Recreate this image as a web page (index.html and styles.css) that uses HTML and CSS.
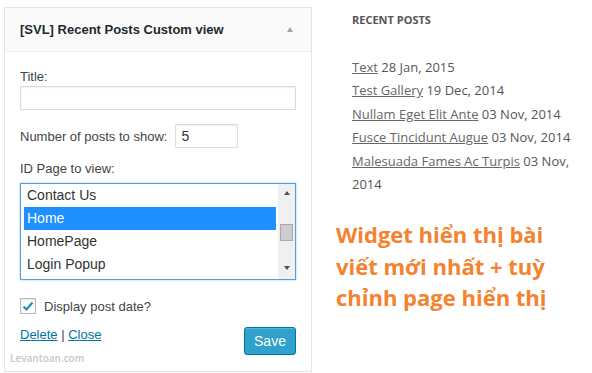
FILE: index.html
```html
<!DOCTYPE html>
<html lang="vi">
  <head>
    <meta charset="UTF-8" />
    <meta name="viewport" content="width=device-width, initial-scale=1.0" />
    <title>SVL Recent Posts widget</title>
    <link rel="stylesheet" href="styles.css">
  </head>
  <body>
    <!--
      Widget settings panel
    -->
    <div class="widget">
      <div class="widget-top">
        <h3>[SVL] Recent Posts Custom view</h3>
        <span class="toggle" aria-hidden="true"></span>
      </div>

      <form class="widget-inside">
        <label class="field-label" for="title">Title:</label>
        <input id="title" class="text-input" type="text" />

        <div class="inline-row">
          <label for="number">Number of posts to show:</label>
          <input id="number" class="small-input" type="text" value="5" />
        </div>

        <label class="field-label">ID Page to view:</label>
        <div class="listbox">
          <ul class="options">
            <li>Contact Us</li>
            <li class="selected">Home</li>
            <li>HomePage</li>
            <li>Login Popup</li>
          </ul>
          <div class="scrollbar" aria-hidden="true">
            <span class="arrow up"></span>
            <span class="thumb"></span>
            <span class="arrow down"></span>
          </div>
        </div>

        <div class="check-row">
          <span class="checkbox">
            <svg width="14" height="14" viewBox="0 0 14 14">
              <path d="M2.5 7.5 L5.5 10.5 L11.5 3.5" fill="none" stroke="#1e8cbe" stroke-width="2.2" />
            </svg>
          </span>
          <span>Display post date?</span>
        </div>

        <div class="actions">
          <div class="links">
            <a href="#">Delete</a> | <a href="#">Close</a>
          </div>
          <button type="button" class="save">Save</button>
        </div>
      </form>

      <span class="watermark">Levantoan.com</span>
    </div>

    <!--
      Front-end preview
    -->
    <aside class="sidebar">
      <section class="recent">
        <h4>Recent Posts</h4>
        <ul>
          <li><a href="#">Text</a> 28 Jan, 2015</li>
          <li><a href="#">Test Gallery</a> 19 Dec, 2014</li>
          <li><a href="#">Nullam Eget Elit Ante</a> 03 Nov, 2014</li>
          <li><a href="#">Fusce Tincidunt Augue</a> 03 Nov, 2014</li>
          <li><a href="#">Malesuada Fames Ac Turpis</a> 03 Nov, 2014</li>
        </ul>
      </section>

      <p class="caption">Widget hiển thị bài viết mới nhất + tuỳ chỉnh page hiển thị</p>
    </aside>
  </body>
</html>
```

FILE: styles.css
```css
/*
  Global styles
*/

:root {
  --border: #e5e5e5;
  --text: #444;
  --link: #0073aa;
  --orange: #f5822f;
}
* {
  margin: 0;
  padding: 0;
  box-sizing: border-box;
}
body {
  display: flex;
  align-items: flex-start;
  background-color: #fff;
  font-family: "Liberation Sans", Arial, sans-serif;
  font-size: 13px;
  color: var(--text);
}
ul {
  list-style: none;
}

/*
  [1] Widget panel
*/

.widget {
  position: relative;
  width: 308px;
  margin: 7px 0 0 4px;
  border: 1px solid var(--border);
  box-shadow: 0 1px 1px rgb(0 0 0 / 4%);
}
.widget-top {
  display: flex;
  align-items: center;
  justify-content: space-between;
  height: 44px;
  padding: 0 18px 0 15px;
  background-color: #fafafa;
  border-bottom: 1px solid #eee;
}
.widget-top h3 {
  font-size: 13px;
  font-weight: bold;
  color: #23282d;
}
.toggle {
  width: 0;
  height: 0;
  border-left: 3.5px solid transparent;
  border-right: 3.5px solid transparent;
  border-bottom: 5px solid #a0a5aa;
}
.widget-inside {
  display: flex;
  flex-direction: column;
  padding: 17px 15px 16px;
}
.field-label {
  line-height: 16px;
}
.text-input {
  height: 24px;
  margin-top: 1px;
  border: 1px solid #ddd;
  box-shadow: inset 0 1px 2px rgb(0 0 0 / 7%);
  outline: none;
}
.inline-row {
  display: flex;
  align-items: center;
  gap: 8px;
  margin: 14px 0 13px;
}
.small-input {
  width: 63px;
  height: 24px;
  padding: 0 5px;
  border: 1px solid #ddd;
  box-shadow: inset 0 1px 2px rgb(0 0 0 / 7%);
  font-family: "Liberation Sans", Arial, sans-serif;
  font-size: 14px;
  color: #333;
  outline: none;
}

/* list box */

.listbox {
  display: flex;
  height: 97px;
  margin-top: 6px;
  padding-left: 3px;
  border: 1px solid #5b9dd9;
  box-shadow: 0 0 2px rgb(30 140 190 / 50%);
  overflow: hidden;
}
.options {
  flex: 1;
  margin-right: 2px;
  font-size: 14px;
  color: #333;
}
.options li {
  height: 23px;
  line-height: 23px;
  padding-left: 3px;
}
.options li.selected {
  color: #fff;
  background-color: #1e90ff;
}
.scrollbar {
  display: flex;
  flex-direction: column;
  align-items: center;
  width: 17px;
  background-color: #f0f0f0;
}
.arrow {
  width: 0;
  height: 0;
  border-left: 3.5px solid transparent;
  border-right: 3.5px solid transparent;
}
.arrow.up {
  margin-top: 7px;
  border-bottom: 4px solid #505050;
}
.arrow.down {
  margin-top: auto;
  margin-bottom: 9px;
  border-top: 4px solid #505050;
}
.thumb {
  width: 13px;
  height: 17px;
  margin-top: 29px;
  background-color: #cdcdcd;
  border: 1px solid #a9a9a9;
}

/* checkbox + actions */

.check-row {
  display: flex;
  align-items: center;
  gap: 8px;
  margin-top: 18px;
  font-size: 13px;
}
.checkbox {
  display: flex;
  align-items: center;
  justify-content: center;
  width: 16px;
  height: 16px;
  border: 1px solid #b4b9be;
  box-shadow: inset 0 1px 2px rgb(0 0 0 / 10%);
}
.actions {
  display: flex;
  align-items: flex-start;
  justify-content: space-between;
  margin-top: 13px;
}
.links {
  line-height: 16px;
}
.links a {
  color: var(--link);
}
.save {
  width: 52px;
  height: 28px;
  border: 1px solid #0074a2;
  border-radius: 3px;
  background-color: #2ea2cc;
  box-shadow: inset 0 1px 0 rgb(120 200 230 / 50%);
  font-family: "Liberation Sans", Arial, sans-serif;
  font-size: 14px;
  color: #fff;
}
.watermark {
  position: absolute;
  left: 5px;
  bottom: 6px;
  font-family: "Open Sans", sans-serif;
  font-size: 10px;
  font-weight: 600;
  color: #c6c6c6;
}

/*
  [2] Sidebar preview
*/

.sidebar {
  width: 250px;
  margin-left: 24px;
  font-family: "Open Sans", sans-serif;
}
.recent {
  padding: 12px 0 0 16px;
}
.recent h4 {
  font-size: 11px;
  line-height: 15px;
  font-weight: bold;
  text-transform: uppercase;
  color: #555;
}
.recent ul {
  width: 228px;
  margin-top: 29px;
  font-size: 13px;
  line-height: 23.4px;
  color: #555;
}
.recent a {
  color: #666;
}
.caption {
  width: 240px;
  margin-top: 23px;
  font-size: 22px;
  line-height: 31.5px;
  font-weight: bold;
  color: var(--orange);
}
```
